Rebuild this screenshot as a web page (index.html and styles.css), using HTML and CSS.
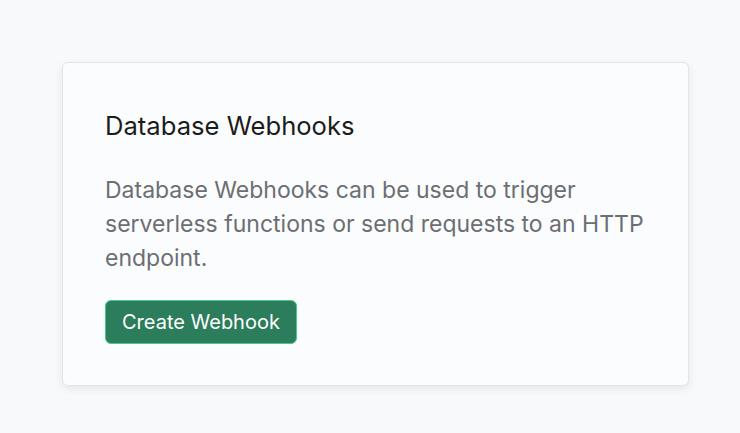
FILE: index.html
```html
<!DOCTYPE html>
<html lang="en">
<head>
    <meta charset="UTF-8">
    <title>Database Webhooks</title>
    <link rel="stylesheet" href="styles.css">
</head>
<body>
<div class="page">
    <div class="card">
        <h2 class="title">Database Webhooks</h2>
        <p class="text">Database Webhooks can be used to trigger serverless functions or send requests to an HTTP endpoint.</p>
        <button class="create">Create Webhook</button>
    </div>
</div>
</body>
</html>
```

FILE: styles.css
```css
body {
    margin: 0;
    background-color: #f8f9fa;
    font-family: "Inter", "Noto Sans", sans-serif;
}

.page {
    padding: 62px 51px 40px 62px;
}

.card {
    width: 627px;
    height: 324px;
    box-sizing: border-box;
    padding: 48px 42px 0 42px;
    background-color: #fbfcfd;
    border: 1px solid #e4e5e7;
    border-radius: 6px;
    box-shadow: 0 3px 8px rgba(0, 0, 0, 0.08);
}

.title {
    margin: 0;
    font-size: 25.6px;
    font-weight: 400;
    line-height: 30px;
    color: #1c1c1c;
}

.text {
    margin: 32px 0 0;
    max-width: 543px;
    font-size: 23px;
    line-height: 34px;
    color: #6b6f73;
}

.create {
    display: block;
    margin-top: 25px;
    height: 44px;
    padding: 0 16px;
    font-family: inherit;
    font-size: 20px;
    color: #ffffff;
    background-color: #2b7d5b;
    border: 1px solid #45c98f;
    border-radius: 6px;
}
```
